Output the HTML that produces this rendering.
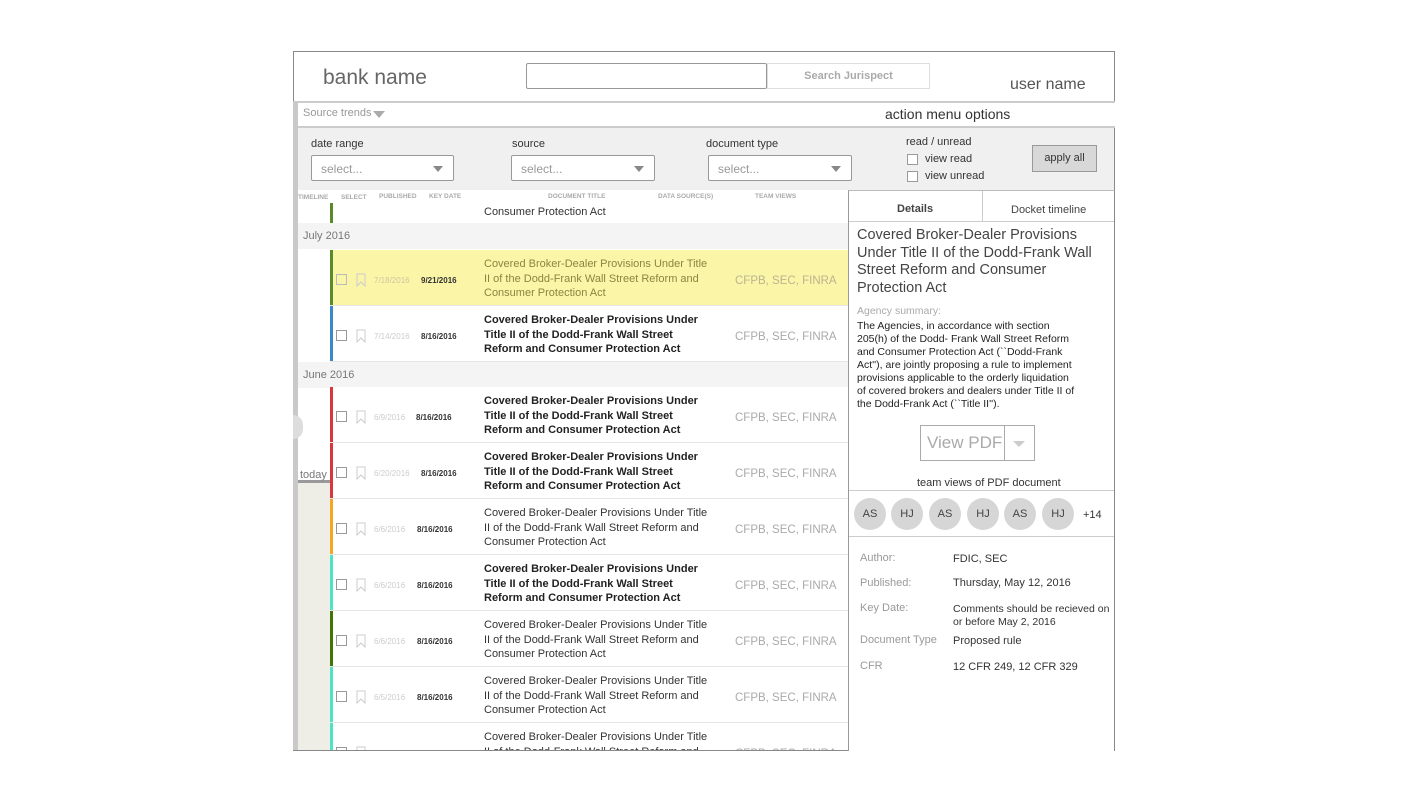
<!DOCTYPE html>
<html><head><meta charset="utf-8"><style>
*{margin:0;padding:0;box-sizing:border-box}
body{width:1407px;height:802px;background:#fff;font-family:"Liberation Sans",sans-serif;position:relative;overflow:hidden;color:#333}
.a{position:absolute}
.frame{left:293px;top:51px;width:822px;height:700px;border:1px solid #888}
.sel{height:26px;border:1px solid #999;background:#fff;font-size:12px;color:#999;padding:6px 9px;border-radius:2px}
.sel:after{content:"";position:absolute;right:10px;top:10px;border:5px solid transparent;border-top:6px solid #888}
.cb{width:11px;height:11px;border:1px solid #999;background:#fff}
.row{left:330px;width:518px;height:56px;border-bottom:1px solid #e6e6e6;background:#fff}
.row .bar{position:absolute;left:0;top:0;bottom:0;width:3px}
.row .c{position:absolute;left:6px;top:24px}
.row .bk{position:absolute;left:26px;top:23px}
.row .p{position:absolute;left:44px;top:26px;font-size:8px;color:#ccc}
.row .k{position:absolute;left:91px;top:26px;font-size:8px;font-weight:bold;color:#333}
.row .t{position:absolute;left:154px;top:7px;width:232px;font-size:11px;line-height:14.5px;color:#333}
.row .t.b{font-weight:bold;color:#222;width:222px}
.row .s{position:absolute;left:405px;top:25px;font-size:11.5px;color:#aaa}
.mh{left:298px;width:550px;height:26px;background:#f4f4f4;font-size:11px;color:#777;padding:7px 5px}
.av{width:32px;height:32px;border-radius:50%;background:#d6d6d6;font-size:11px;color:#444;text-align:center;line-height:32px;top:498px}
.lbl{font-size:11px;color:#999;left:860px}
.val{font-size:11px;color:#333;left:953px}
</style></head><body>
<svg width="0" height="0" style="position:absolute"><defs><symbol id="bm" viewBox="0 0 10 14"><path d="M1 1H9V13L5 9L1 13Z" fill="none" stroke="#ccc" stroke-width="1"/></symbol></defs></svg>
<div class="a frame"></div>
<div class="a" style="left:323px;top:66px;font-size:21px;color:#666">bank name</div>
<div class="a" style="left:526px;top:63px;width:241px;height:26px;border:1px solid #999;border-radius:2px"></div>
<div class="a" style="left:767px;top:63px;width:163px;height:26px;border:1px solid #ddd;font-size:11px;color:#aaa;font-weight:bold;text-align:center;line-height:25px">Search Jurispect</div>
<div class="a" style="left:1010px;top:76px;font-size:16px;color:#555">user name</div>
<div class="a" style="left:293px;top:101px;width:822px;height:27px;border-top:2px solid #ccc;border-bottom:2px solid #ccc;background:#fff"></div>
<div class="a" style="left:303px;top:107px;font-size:11px;color:#999">Source trends</div>
<div class="a" style="left:373px;top:111px;border:6px solid transparent;border-top:7px solid #aaa"></div>
<div class="a" style="left:885px;top:106px;font-size:14px;color:#333">action menu options</div>
<div class="a" style="left:293px;top:101px;width:5px;height:649px;background:#c9c9c9"></div>
<div class="a" style="left:298px;top:128px;width:816px;height:62px;background:#f0f0f0"></div>
<div class="a" style="left:311px;top:138px;font-size:11px">date range</div>
<div class="a sel" style="left:311px;top:155px;width:143px">select...</div>
<div class="a" style="left:512px;top:138px;font-size:11px">source</div>
<div class="a sel" style="left:511px;top:155px;width:144px">select...</div>
<div class="a" style="left:706px;top:138px;font-size:11px">document type</div>
<div class="a sel" style="left:708px;top:155px;width:144px">select...</div>
<div class="a" style="left:906px;top:136px;font-size:11px">read / unread</div>
<div class="a cb" style="left:907px;top:154px"></div><div class="a" style="left:925px;top:153px;font-size:11px">view read</div>
<div class="a cb" style="left:907px;top:171px"></div><div class="a" style="left:925px;top:170px;font-size:11px">view unread</div>
<div class="a" style="left:1032px;top:145px;width:65px;height:27px;background:#d8d8d8;border:1px solid #999;font-size:11px;text-align:center;line-height:25px">apply all</div>
<div class="a" style="left:298px;top:190px;width:32px;height:292px;background:#fff"></div>
<div class="a" style="left:298px;top:482px;width:32px;height:268px;background:#eeede6"></div>
<div class="a" style="left:298px;top:480px;width:32px;height:3px;background:#999"></div>
<div class="a" style="left:300px;top:469px;font-size:11px;color:#777">today</div>
<div class="a" style="left:293px;top:415px;width:10px;height:24px;border-radius:0 12px 12px 0;background:#ddd"></div>
<div class="a" style="left:330px;top:203px;width:518px;height:20px;background:#fff"></div>
<div class="a" style="left:330px;top:203px;width:3px;height:20px;background:#5a8a2a"></div>
<div class="a" style="left:484px;top:206px;font-size:11px">Consumer Protection Act</div>
<div class="a" style="left:298px;top:190px;width:550px;height:13px;background:#fff;font-size:6.5px;color:#aaa;font-weight:bold">
<span class="a" style="left:0;top:4px">TIMELINE</span><span class="a" style="left:43px;top:4px">SELECT</span><span class="a" style="left:81px;top:3px">PUBLISHED</span><span class="a" style="left:131px;top:3px">KEY DATE</span><span class="a" style="left:250px;top:3px">DOCUMENT TITLE</span><span class="a" style="left:360px;top:3px">DATA SOURCE(S)</span><span class="a" style="left:457px;top:3px">TEAM VIEWS</span></div>
<div class="a mh" style="top:223px">July 2016</div>
<div class="a row" style="top:250px;background:#fbf5a8"><div class="bar" style="background:#5a8a2a"></div><div class="c cb" style="border-color:#bbb;background:transparent"></div><svg class="bk" width="10" height="14"><use href="#bm"/></svg><div class="p" style="color:#ccc6a0">7/18/2016</div><div class="k">9/21/2016</div><div class="t" style="color:#8a8540">Covered Broker-Dealer Provisions Under Title II of the Dodd-Frank Wall Street Reform and Consumer Protection Act</div><div class="s" style="color:#bbb490">CFPB, SEC, FINRA</div></div>
<div class="a row" style="top:306px"><div class="bar" style="background:#3b88c8"></div><div class="c cb"></div><svg class="bk" width="10" height="14"><use href="#bm"/></svg><div class="p">7/14/2016</div><div class="k">8/16/2016</div><div class="t b">Covered Broker-Dealer Provisions Under Title II of the Dodd-Frank Wall Street Reform and Consumer Protection Act</div><div class="s">CFPB, SEC, FINRA</div></div>
<div class="a mh" style="top:362px">June 2016</div>
<div class="a row" style="top:387px"><div class="bar" style="background:#d9363e"></div><div class="c cb"></div><svg class="bk" width="10" height="14"><use href="#bm"/></svg><div class="p">6/9/2016</div><div class="k" style="left:86px">8/16/2016</div><div class="t b">Covered Broker-Dealer Provisions Under Title II of the Dodd-Frank Wall Street Reform and Consumer Protection Act</div><div class="s">CFPB, SEC, FINRA</div></div>
<div class="a row" style="top:443px"><div class="bar" style="background:#d9363e"></div><div class="c cb"></div><svg class="bk" width="10" height="14"><use href="#bm"/></svg><div class="p">6/20/2016</div><div class="k">8/16/2016</div><div class="t b">Covered Broker-Dealer Provisions Under Title II of the Dodd-Frank Wall Street Reform and Consumer Protection Act</div><div class="s">CFPB, SEC, FINRA</div></div>
<div class="a row" style="top:499px"><div class="bar" style="background:#f5a623"></div><div class="c cb"></div><svg class="bk" width="10" height="14"><use href="#bm"/></svg><div class="p">6/6/2016</div><div class="k" style="left:87px">8/16/2016</div><div class="t">Covered Broker-Dealer Provisions Under Title II of the Dodd-Frank Wall Street Reform and Consumer Protection Act</div><div class="s">CFPB, SEC, FINRA</div></div>
<div class="a row" style="top:555px"><div class="bar" style="background:#50e3c2"></div><div class="c cb"></div><svg class="bk" width="10" height="14"><use href="#bm"/></svg><div class="p">6/6/2016</div><div class="k" style="left:87px">8/16/2016</div><div class="t b">Covered Broker-Dealer Provisions Under Title II of the Dodd-Frank Wall Street Reform and Consumer Protection Act</div><div class="s">CFPB, SEC, FINRA</div></div>
<div class="a row" style="top:611px"><div class="bar" style="background:#417505"></div><div class="c cb"></div><svg class="bk" width="10" height="14"><use href="#bm"/></svg><div class="p">6/6/2016</div><div class="k" style="left:87px">8/16/2016</div><div class="t">Covered Broker-Dealer Provisions Under Title II of the Dodd-Frank Wall Street Reform and Consumer Protection Act</div><div class="s">CFPB, SEC, FINRA</div></div>
<div class="a row" style="top:667px"><div class="bar" style="background:#50e3c2"></div><div class="c cb"></div><svg class="bk" width="10" height="14"><use href="#bm"/></svg><div class="p">6/5/2016</div><div class="k" style="left:87px">8/16/2016</div><div class="t">Covered Broker-Dealer Provisions Under Title II of the Dodd-Frank Wall Street Reform and Consumer Protection Act</div><div class="s">CFPB, SEC, FINRA</div></div>
<div class="a" style="left:330px;top:723px;width:518px;height:27px;overflow:hidden"><div class="a row" style="left:0;top:0"><div class="bar" style="background:#50e3c2"></div><div class="c cb"></div><svg class="bk" width="10" height="14"><use href="#bm"/></svg><div class="p">6/5/2016</div><div class="k">8/16/2016</div><div class="t">Covered Broker-Dealer Provisions Under Title II of the Dodd-Frank Wall Street Reform and Consumer Protection Act</div><div class="s">CFPB, SEC, FINRA</div></div></div>
<div class="a" style="left:848px;top:190px;width:267px;height:561px;border-left:1px solid #999;border-right:1px solid #888;border-top:1px solid #bbb;background:#fff"></div>
<div class="a" style="left:982px;top:191px;width:1px;height:30px;background:#ccc"></div>
<div class="a" style="left:849px;top:221px;width:265px;height:1px;background:#ccc"></div>
<div class="a" style="left:897px;top:203px;font-size:11px;font-weight:bold;color:#444">Details</div>
<div class="a" style="left:1011px;top:204px;font-size:11px;color:#444">Docket timeline</div>
<div class="a" style="left:857px;top:227px;width:250px;font-size:14.5px;line-height:17.5px;color:#444">Covered Broker-Dealer Provisions Under Title II of the Dodd-Frank Wall Street Reform and Consumer Protection Act</div>
<div class="a" style="left:857px;top:305px;font-size:10.5px;color:#aaa">Agency summary:</div>
<div class="a" style="left:857px;top:320px;width:220px;font-size:10.5px;line-height:13px;color:#222">The Agencies, in accordance with section 205(h) of the Dodd- Frank Wall Street Reform and Consumer Protection Act (``Dodd-Frank Act''), are jointly proposing a rule to implement provisions applicable to the orderly liquidation of covered brokers and dealers under Title II of the Dodd-Frank Act (``Title II'').</div>
<div class="a" style="left:920px;top:425px;width:115px;height:36px;border:1px solid #aaa"></div>
<div class="a" style="left:1004px;top:425px;width:1px;height:36px;background:#aaa"></div>
<div class="a" style="left:927px;top:433px;font-size:17px;color:#aaa">View PDF</div>
<div class="a" style="left:1013px;top:441px;border:6px solid transparent;border-top:6px solid #ccc"></div>
<div class="a" style="left:917px;top:477px;font-size:11px;color:#333">team views of PDF document</div>
<div class="a" style="left:849px;top:490px;width:265px;height:1px;background:#ccc"></div>
<div class="a av" style="left:854px">AS</div><div class="a av" style="left:891px">HJ</div><div class="a av" style="left:929px">AS</div><div class="a av" style="left:967px">HJ</div><div class="a av" style="left:1004px">AS</div><div class="a av" style="left:1042px">HJ</div>
<div class="a" style="left:1083px;top:509px;font-size:11px">+14</div>
<div class="a" style="left:849px;top:536px;width:265px;height:1px;background:#ccc"></div>
<div class="a lbl" style="top:552px">Author:</div><div class="a val" style="top:553px">FDIC, SEC</div>
<div class="a lbl" style="top:577px">Published:</div><div class="a val" style="top:577px">Thursday, May 12, 2016</div>
<div class="a lbl" style="top:602px">Key Date:</div><div class="a val" style="top:603px;line-height:13px;white-space:nowrap;font-size:10.5px">Comments should be recieved on<br>or before May 2, 2016</div>
<div class="a lbl" style="top:634px">Document Type</div><div class="a val" style="top:635px">Proposed rule</div>
<div class="a lbl" style="top:660px">CFR</div><div class="a val" style="top:661px">12 CFR 249, 12 CFR 329</div>
</body></html>
